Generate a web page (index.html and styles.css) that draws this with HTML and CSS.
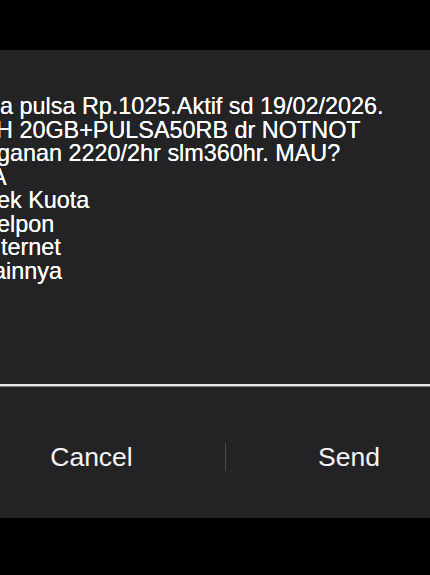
FILE: index.html
```html
<!DOCTYPE html>
<html>
<head>
<meta charset="utf-8">
<link rel="stylesheet" href="styles.css">
</head>
<body>
<div class="dialog">
  <div class="message">
    <div class="line l1">a pulsa Rp.1025.Aktif sd 19/02/2026.</div>
    <div class="line l2">H 20GB+PULSA50RB dr NOTNOT</div>
    <div class="line l3">ganan 2220/2hr slm360hr. MAU?</div>
    <div class="line l4">A</div>
    <div class="line l5">ek Kuota</div>
    <div class="line l6">elpon</div>
    <div class="line l7">ternet</div>
    <div class="line l8">ainnya</div>
  </div>
  <div class="rule"></div>
  <div class="actions">
    <div class="btn btn-cancel">Cancel</div>
    <div class="sep"></div>
    <div class="btn btn-send">Send</div>
  </div>
</div>
</body>
</html>
```

FILE: styles.css
```css
html, body {
  margin: 0;
  padding: 0;
  background: #000;
  width: 430px;
  height: 575px;
  overflow: hidden;
}
body {
  font-family: "Liberation Sans", Arial, sans-serif;
  color: #fff;
}
.dialog {
  margin-top: 50px;
  height: 468px;
  background: #232325;
  overflow: hidden;
  display: flex;
  flex-direction: column;
}
.message {
  height: 289px;
  flex: none;
  overflow: hidden;
  padding-top: 45px;
  font-size: 23.4px;
  line-height: 23.5px;
  text-shadow: 0 0 0.4px #fff;
}
.line {
  display: block;
  white-space: pre;
}
.l1 { margin-left: 0px; }
.l2 { margin-left: -4px; }
.l3 { margin-left: -3px; }
.l4 { margin-left: -9px; }
.l5 { margin-left: -3px; }
.l6 { margin-left: -3px; }
.l7 { margin-left: 1px; }
.l8 { margin-left: -7px; }
.rule {
  height: 2px;
  flex: none;
  background: #e8e8e8;
  border-bottom: 1px solid #7a7a7a;
}
.actions {
  flex: 1;
  display: flex;
  align-items: center;
  padding-top: 9px;
  box-sizing: border-box;
}
.btn {
  font-size: 26.5px;
  text-align: center;
  color: #f4f4f4;
}
.btn-cancel {
  width: 267px;
  margin-left: -42px;
  flex: none;
}
.btn-send {
  width: 246px;
  flex: none;
}
.sep {
  width: 1px;
  height: 28px;
  background: #4a4a4c;
  flex: none;
}
```
